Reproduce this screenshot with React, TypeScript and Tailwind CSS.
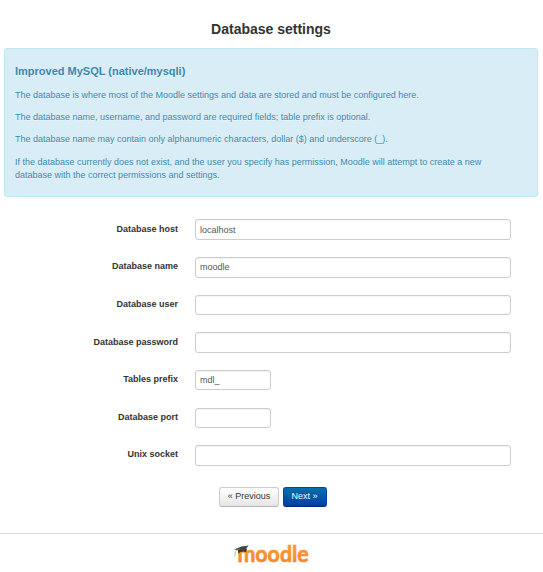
const fields = [
  { label: 'Database host', value: 'localhost', wide: true, input: 'h-[20.67px]' },
  { label: 'Database name', value: 'moodle', wide: true, input: 'h-[20.67px]' },
  { label: 'Database user', value: '', wide: true, input: 'h-5' },
  { label: 'Database password', value: '', wide: true, input: 'h-[20.67px]' },
  { label: 'Tables prefix', value: 'mdl_', wide: false, input: 'h-5' },
  { label: 'Database port', value: '', wide: false, input: 'h-5' },
  { label: 'Unix socket', value: '', wide: true, input: 'h-[20.67px]' },
];

function MoodleLogo() {
  return (
    <svg width="76" height="28" viewBox="0 0 76 28" role="img" aria-label="moodle" className="overflow-visible">
      <defs>
        <linearGradient id="orange" x1="0" y1="0" x2="0" y2="1">
          <stop offset="0" stopColor="#f9a040" />
          <stop offset="1" stopColor="#f58426" />
        </linearGradient>
      </defs>
      <text
        x="3.4"
        y="20.8"
        fill="url(#orange)"
        stroke="url(#orange)"
        strokeWidth="0.7"
        textLength="71.4"
        lengthAdjust="spacingAndGlyphs"
        className="font-['Lato',sans-serif] text-[23.5px] leading-[28px] font-bold"
      >
        moodle
      </text>
      <path d="M3.8 8.2 4.2 12.6Q8 9.3 12.2 11.2L13 7.5Z" fill="#3b3838" />
      <path d="M0 8.4 7.5 5.4 14.8 4.6 10 9.7Z" fill="#474443" />
      <path d="M6 7.8Q2.4 8.5 1.5 10.5L.7 15.5" fill="none" stroke="#8a837e" strokeWidth="0.6" />
    </svg>
  );
}

export default function App() {
  return (
    <div className="h-[572px] w-[543px] overflow-hidden bg-white pt-5 font-['Liberation_Sans',Arial,sans-serif] text-[9px] leading-[13.33px] text-[#333]">
      <h2 className="pr-px text-center text-[14px] leading-[18px] font-bold">Database settings</h2>

      <section className="mt-[10px] ml-1 h-[149px] w-[534px] rounded-[3px] border border-[#bce8f1] bg-[#d9edf7] px-[10px] pt-[15px] text-[#3a87ad] [text-shadow:0_1px_0_rgba(255,255,255,0.5)]">
        <h3 className="text-[11px] leading-[15px] font-bold">Improved MySQL (native/mysqli)</h3>
        <div className="mt-[9.5px] space-y-[9px] whitespace-nowrap">
          <p>The database is where most of the Moodle settings and data are stored and must be configured here.</p>
          <p>The database name, username, and password are required fields; table prefix is optional.</p>
          <p>The database name may contain only alphanumeric characters, dollar ($) and underscore (_).</p>
          <p className="pt-[0.4px] leading-[13px]">
            If the database currently does not exist, and the user you specify has permission, Moodle will attempt to create a new
            <br />
            database with the correct permissions and settings.
          </p>
        </div>
      </section>

      <form className="mt-[22.4px]">
        {fields.map((f) => (
          <div key={f.label} className="flex h-[37.65px] items-start">
            <label className="w-[178px] pt-[3.2px] text-right font-bold">{f.label}</label>
            <input
              defaultValue={f.value}
              className={`${f.wide ? 'w-[316px]' : 'w-[76px]'} ${f.input} ml-[17px] rounded-[3px] border border-[#ccc] bg-white px-1 text-[#555] shadow-[inset_0_1px_1px_rgba(0,0,0,0.05)] outline-none`}
            />
          </div>
        ))}
        <div className="mt-[4.05px] ml-[219px] flex gap-1">
          <button
            type="button"
            className="h-5 w-[60px] rounded-[3px] border border-[#ccc] border-b-[#b3b3b3] bg-linear-to-b from-white to-[#e6e6e6] [text-shadow:0_1px_1px_rgba(255,255,255,0.75)]"
          >
            « Previous
          </button>
          <button
            type="button"
            className="h-5 w-11 rounded-[3px] border border-[#0044aa] border-b-[#002a80] bg-linear-to-b from-[#0070a8] to-[#003ca4] pr-px text-white [text-shadow:0_-1px_0_rgba(0,0,0,0.25)]"
          >
            Next »
          </button>
        </div>
      </form>

      <footer className="mt-[26px] flex justify-center border-t border-[#ddd] pt-[7px]">
        <MoodleLogo />
      </footer>
    </div>
  );
}
